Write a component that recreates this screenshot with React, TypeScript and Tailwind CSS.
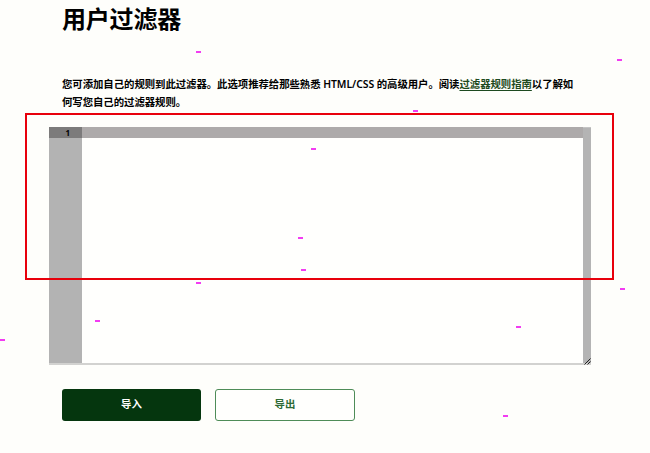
import React from "react";

const specks: { x: number; y: number }[] = [
  { x: 196, y: 51 },
  { x: 617, y: 59 },
  { x: 413, y: 110 },
  { x: 311, y: 148 },
  { x: 298, y: 237 },
  { x: 301, y: 269 },
  { x: 196, y: 282 },
  { x: 620, y: 288 },
  { x: 95, y: 320 },
  { x: 0, y: 339 },
  { x: 516, y: 326 },
  { x: 503, y: 415 },
];

export default function App() {
  return (
    <div
      className="relative w-[650px] h-[453px] overflow-hidden bg-[#fefefb] text-black"
      style={{ fontFamily: '"Noto Sans", "Noto Sans CJK SC", sans-serif' }}
    >
      <div className="pl-[62px] pt-[7px] flex flex-col">
        <h1 className="text-[24px] leading-[24px] font-bold tracking-[-0.2px]">用户过滤器</h1>
        <p className="mt-[44px] w-[512px] text-[10.4px] leading-[18px] font-semibold tracking-[-0.05px]">
          您可添加自己的规则到此过滤器。此选项推荐给那些熟悉 HTML/CSS 的高级用户。阅读
          <span className="text-[#1d4a20] underline underline-offset-[2px]">过滤器规则指南</span>
          以了解如何写您自己的过滤器规则。
        </p>

        <div className="mt-[16px] ml-[-13px] w-[542px] h-[238px] flex border-b-[2px] border-[#d2d2d0]">
          <div className="w-[33px] flex flex-col bg-[#b3b3b3]">
            <div className="h-[11px] bg-[#7c7b7b] flex items-center justify-end pr-[12px] text-[8px] font-bold leading-none">
              1
            </div>
          </div>
          <div className="flex-1 flex flex-col bg-[#fffffd]">
            <div className="h-[11px] bg-[#adaaaa]" />
          </div>
          <div className="relative w-[8px] bg-[#b4b4b4]">
            <div className="h-[1px] bg-[#c4c4c4]" />
            <svg
              className="absolute right-0 bottom-[-2px]"
              width="7"
              height="7"
              viewBox="0 0 7 7"
            >
              <line x1="0.5" y1="6.5" x2="6.5" y2="0.5" stroke="#222" strokeWidth="1" />
              <line x1="3.5" y1="6.5" x2="6.5" y2="3.5" stroke="#222" strokeWidth="1" />
            </svg>
          </div>
        </div>

        <div className="mt-[24px] flex gap-[14px]">
          <button className="w-[139px] h-[32px] rounded-[3px] bg-[#05360e] text-white text-[10.4px] font-semibold">
            导入
          </button>
          <button className="w-[140px] h-[32px] rounded-[3px] border border-[#4e8c58] bg-[#fffffd] text-[#2d6a35] text-[10.4px] font-semibold">
            导出
          </button>
        </div>
      </div>

      <div className="absolute left-[25px] top-[113px] w-[589px] h-[167px] border-[2.5px] border-[#e8000b] pointer-events-none" />

      {specks.map((s, i) => (
        <span
          key={i}
          className="absolute w-[5px] h-[2px] bg-[#f23cf2]"
          style={{ left: s.x, top: s.y }}
        />
      ))}
    </div>
  );
}
